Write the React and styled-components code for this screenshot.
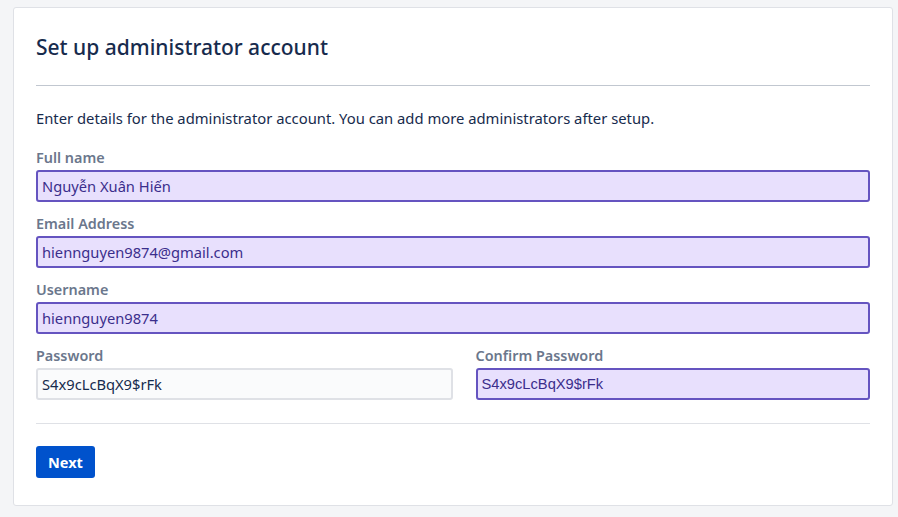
import React from "react";
import styled, { createGlobalStyle } from "styled-components";

const Global = createGlobalStyle`
  html, body { margin: 0; padding: 0; background: #f4f5f7; }
  body { font-family: "Noto Sans", "Open Sans", sans-serif; color: #172b4d; }
  * { box-sizing: border-box; }
`;

const Page = styled.div`
  padding: 7px 5px 11px 13px;
  min-height: 517px;
`;

const Card = styled.div`
  background: #fff;
  border: 1px solid #dfe1e6;
  border-radius: 3px;
  padding: 25px 22px 27px 22px;
  display: flex;
  flex-direction: column;
`;

const Title = styled.h1`
  margin: 0;
  font-size: 21px;
  font-weight: 500;
  line-height: 28px;
  color: #172b4d;
`;

const Rule = styled.hr`
  border: none;
  border-top: ${(p) => (p.$strong ? "1px solid #c1c7d0" : "1px solid #dfe1e6")};
  margin: ${(p) => p.$m};
  height: 0;
`;

const Desc = styled.p`
  margin: 0;
  font-size: 14.8px;
  line-height: 20px;
  color: #172b4d;
`;

const Field = styled.div`
  display: flex;
  flex-direction: column;
  margin-top: ${(p) => p.$mt || "14px"};
  min-width: 0;
`;

const Label = styled.label`
  font-size: 14.4px;
  font-weight: 600;
  color: #6b778c;
  line-height: 16px;
  margin-bottom: 4px;
`;

const Input = styled.input`
  height: 32px;
  width: 100%;
  border-radius: 3px;
  border: 2px solid ${(p) => (p.$filled ? "#6554c0" : "#dfe1e6")};
  background: ${(p) => (p.$filled ? "#e8e0fd" : "#fafbfc")};
  color: ${(p) => (p.$filled ? "#3b2e8c" : "#172b4d")};
  font-family: ${(p) => (p.$arial ? '"Liberation Sans", Arial, sans-serif' : '"Noto Sans", sans-serif')};
  font-size: 14.7px;
  padding: 0 4px;
  outline: none;
`;

const Row = styled.div`
  display: grid;
  grid-template-columns: 416fr 394fr;
  column-gap: 23px;
`;

const Actions = styled.div`
  display: flex;
`;

const Button = styled.button`
  height: 32px;
  padding: 0 12px;
  border: none;
  border-radius: 3px;
  background: #0052cc;
  color: #fff;
  font-family: "Noto Sans", sans-serif;
  font-size: 14.5px;
  font-weight: 700;
  cursor: pointer;
`;

export default function App() {
  return (
    <>
      <Global />
      <Page>
        <Card>
          <Title>Set up administrator account</Title>
          <Rule $strong $m="24px 0 22px" />
          <Desc>Enter details for the administrator account. You can add more administrators after setup.</Desc>
          <Field $mt="22px">
            <Label>Full name</Label>
            <Input $filled defaultValue="Nguyễn Xuân Hiến" />
          </Field>
          <Field>
            <Label>Email Address</Label>
            <Input $filled defaultValue="hiennguyen9874@gmail.com" />
          </Field>
          <Field>
            <Label>Username</Label>
            <Input $filled defaultValue="hiennguyen9874" />
          </Field>
          <Row>
            <Field>
              <Label>Password</Label>
              <Input defaultValue="S4x9cLcBqX9$rFk" />
            </Field>
            <Field>
              <Label>Confirm Password</Label>
              <Input $filled $arial defaultValue="S4x9cLcBqX9$rFk" />
            </Field>
          </Row>
          <Rule $m="23px 0 22px" />
          <Actions>
            <Button>Next</Button>
          </Actions>
        </Card>
      </Page>
    </>
  );
}
